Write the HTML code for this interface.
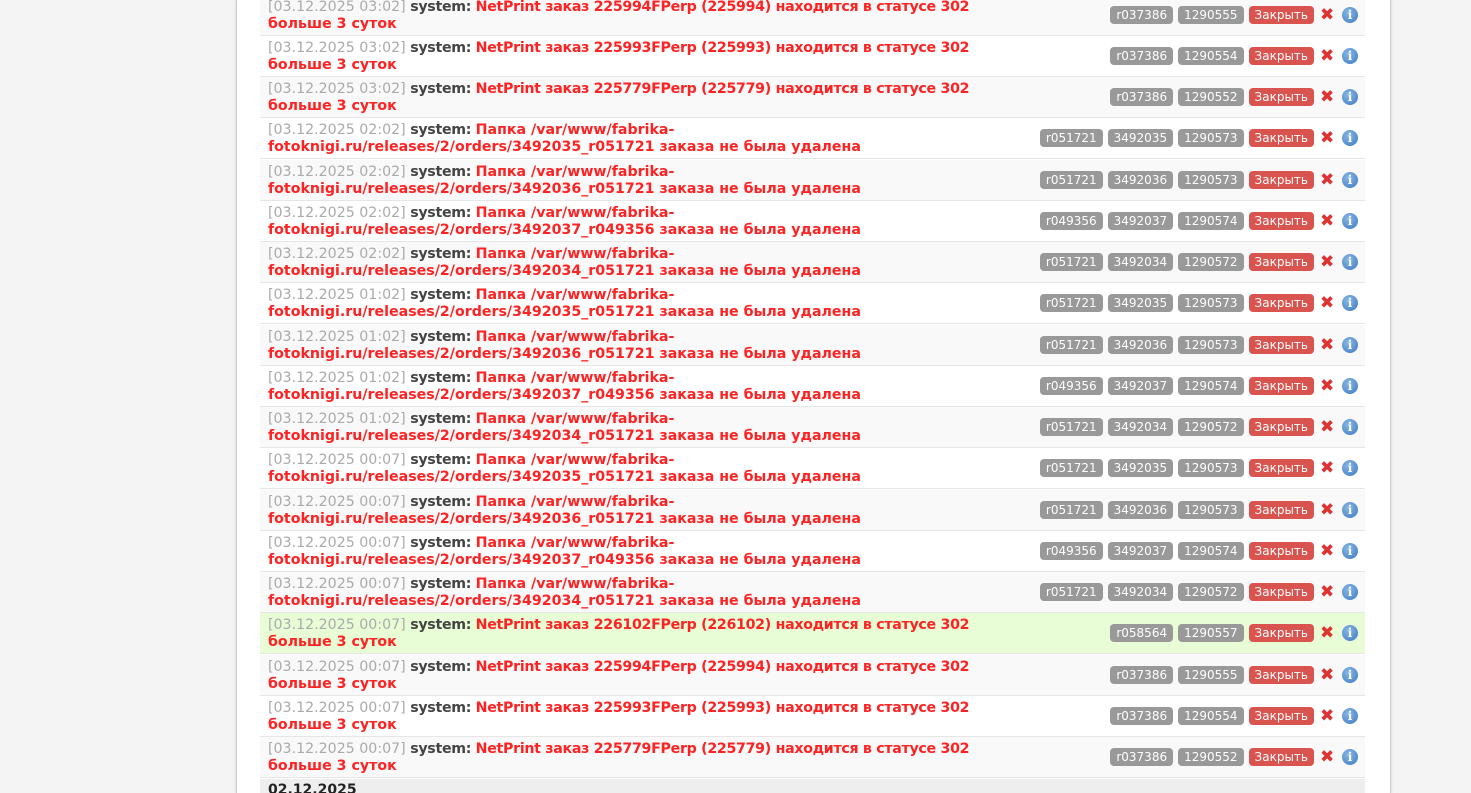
<!DOCTYPE html><html><head><meta charset="utf-8"><style>
html,body{margin:0;width:1471px;height:793px;overflow:hidden}
body{background:#f4f4f4;font-family:"DejaVu Sans",Verdana,sans-serif;position:relative}
.wrap{position:absolute;left:236px;top:0;width:1153px;height:793px;background:#fff;border-left:1px solid #ccc;border-right:1px solid #ccc;box-shadow:0 0 3px rgba(0,0,0,.15)}
.r{position:absolute;left:260px;width:1105px;height:40px;border-bottom:1px solid #e6e6e6;font-size:14.2px;line-height:17px}
.r:nth-child(odd){background:#f9f9f9}
.r.g{background:#e8fdd6!important}
.t{position:absolute;left:8px;top:4px;white-space:nowrap}
.d{color:#aaa}.s{color:#444;font-weight:bold;letter-spacing:-0.3px}.m{color:#f22;font-weight:bold}
.n{letter-spacing:-0.3px}
.b{position:absolute;right:7px;top:11px;display:flex;align-items:center;gap:5px}
.b span{background:#999;color:#fff;font-size:12px;height:18px;line-height:18px;padding:0 6px;border-radius:4px}
.b span.k{background:#d9534f;margin-right:1px}
.x{color:#d33;font-weight:bold;font-size:17px;width:14px;text-align:center;margin-right:3px}
.i{width:16px;height:16px;border-radius:50%;background:radial-gradient(circle at 40% 35%,#8ab8e8,#3a78c0);color:#fff;font:bold 12px/16px "DejaVu Serif",serif;text-align:center}
.dt{position:absolute;left:260px;top:779px;width:1105px;height:20px;background:#eee;font-weight:bold;font-size:14px;color:#222}
</style></head><body><div class="wrap"></div>
<div id="rows">
<div class="r" style="top:-5px"><div class="t"><span class="d">[03.12.2025 03:02]</span> <span class="s">system:</span> <span class="m"><span class="n">NetPrint заказ 225994FPerp (225994) находится в статусе 302</span><br>больше 3 суток</span></div><div class="b"><span>r037386</span><span>1290555</span><span class="k">Закрыть</span><b class="x">✖</b><b class="i">i</b></div></div>
<div class="r" style="top:36px"><div class="t"><span class="d">[03.12.2025 03:02]</span> <span class="s">system:</span> <span class="m"><span class="n">NetPrint заказ 225993FPerp (225993) находится в статусе 302</span><br>больше 3 суток</span></div><div class="b"><span>r037386</span><span>1290554</span><span class="k">Закрыть</span><b class="x">✖</b><b class="i">i</b></div></div>
<div class="r" style="top:77px"><div class="t"><span class="d">[03.12.2025 03:02]</span> <span class="s">system:</span> <span class="m"><span class="n">NetPrint заказ 225779FPerp (225779) находится в статусе 302</span><br>больше 3 суток</span></div><div class="b"><span>r037386</span><span>1290552</span><span class="k">Закрыть</span><b class="x">✖</b><b class="i">i</b></div></div>
<div class="r" style="top:118px"><div class="t"><span class="d">[03.12.2025 02:02]</span> <span class="s">system:</span> <span class="m">Папка /var/www/fabrika-<br>fotoknigi.ru/releases/2/orders/3492035_r051721 заказа не была удалена</span></div><div class="b"><span>r051721</span><span>3492035</span><span>1290573</span><span class="k">Закрыть</span><b class="x">✖</b><b class="i">i</b></div></div>
<div class="r" style="top:160px"><div class="t"><span class="d">[03.12.2025 02:02]</span> <span class="s">system:</span> <span class="m">Папка /var/www/fabrika-<br>fotoknigi.ru/releases/2/orders/3492036_r051721 заказа не была удалена</span></div><div class="b"><span>r051721</span><span>3492036</span><span>1290573</span><span class="k">Закрыть</span><b class="x">✖</b><b class="i">i</b></div></div>
<div class="r" style="top:201px"><div class="t"><span class="d">[03.12.2025 02:02]</span> <span class="s">system:</span> <span class="m">Папка /var/www/fabrika-<br>fotoknigi.ru/releases/2/orders/3492037_r049356 заказа не была удалена</span></div><div class="b"><span>r049356</span><span>3492037</span><span>1290574</span><span class="k">Закрыть</span><b class="x">✖</b><b class="i">i</b></div></div>
<div class="r" style="top:242px"><div class="t"><span class="d">[03.12.2025 02:02]</span> <span class="s">system:</span> <span class="m">Папка /var/www/fabrika-<br>fotoknigi.ru/releases/2/orders/3492034_r051721 заказа не была удалена</span></div><div class="b"><span>r051721</span><span>3492034</span><span>1290572</span><span class="k">Закрыть</span><b class="x">✖</b><b class="i">i</b></div></div>
<div class="r" style="top:283px"><div class="t"><span class="d">[03.12.2025 01:02]</span> <span class="s">system:</span> <span class="m">Папка /var/www/fabrika-<br>fotoknigi.ru/releases/2/orders/3492035_r051721 заказа не была удалена</span></div><div class="b"><span>r051721</span><span>3492035</span><span>1290573</span><span class="k">Закрыть</span><b class="x">✖</b><b class="i">i</b></div></div>
<div class="r" style="top:325px"><div class="t"><span class="d">[03.12.2025 01:02]</span> <span class="s">system:</span> <span class="m">Папка /var/www/fabrika-<br>fotoknigi.ru/releases/2/orders/3492036_r051721 заказа не была удалена</span></div><div class="b"><span>r051721</span><span>3492036</span><span>1290573</span><span class="k">Закрыть</span><b class="x">✖</b><b class="i">i</b></div></div>
<div class="r" style="top:366px"><div class="t"><span class="d">[03.12.2025 01:02]</span> <span class="s">system:</span> <span class="m">Папка /var/www/fabrika-<br>fotoknigi.ru/releases/2/orders/3492037_r049356 заказа не была удалена</span></div><div class="b"><span>r049356</span><span>3492037</span><span>1290574</span><span class="k">Закрыть</span><b class="x">✖</b><b class="i">i</b></div></div>
<div class="r" style="top:407px"><div class="t"><span class="d">[03.12.2025 01:02]</span> <span class="s">system:</span> <span class="m">Папка /var/www/fabrika-<br>fotoknigi.ru/releases/2/orders/3492034_r051721 заказа не была удалена</span></div><div class="b"><span>r051721</span><span>3492034</span><span>1290572</span><span class="k">Закрыть</span><b class="x">✖</b><b class="i">i</b></div></div>
<div class="r" style="top:448px"><div class="t"><span class="d">[03.12.2025 00:07]</span> <span class="s">system:</span> <span class="m">Папка /var/www/fabrika-<br>fotoknigi.ru/releases/2/orders/3492035_r051721 заказа не была удалена</span></div><div class="b"><span>r051721</span><span>3492035</span><span>1290573</span><span class="k">Закрыть</span><b class="x">✖</b><b class="i">i</b></div></div>
<div class="r" style="top:490px"><div class="t"><span class="d">[03.12.2025 00:07]</span> <span class="s">system:</span> <span class="m">Папка /var/www/fabrika-<br>fotoknigi.ru/releases/2/orders/3492036_r051721 заказа не была удалена</span></div><div class="b"><span>r051721</span><span>3492036</span><span>1290573</span><span class="k">Закрыть</span><b class="x">✖</b><b class="i">i</b></div></div>
<div class="r" style="top:531px"><div class="t"><span class="d">[03.12.2025 00:07]</span> <span class="s">system:</span> <span class="m">Папка /var/www/fabrika-<br>fotoknigi.ru/releases/2/orders/3492037_r049356 заказа не была удалена</span></div><div class="b"><span>r049356</span><span>3492037</span><span>1290574</span><span class="k">Закрыть</span><b class="x">✖</b><b class="i">i</b></div></div>
<div class="r" style="top:572px"><div class="t"><span class="d">[03.12.2025 00:07]</span> <span class="s">system:</span> <span class="m">Папка /var/www/fabrika-<br>fotoknigi.ru/releases/2/orders/3492034_r051721 заказа не была удалена</span></div><div class="b"><span>r051721</span><span>3492034</span><span>1290572</span><span class="k">Закрыть</span><b class="x">✖</b><b class="i">i</b></div></div>
<div class="r g" style="top:613px"><div class="t"><span class="d">[03.12.2025 00:07]</span> <span class="s">system:</span> <span class="m"><span class="n">NetPrint заказ 226102FPerp (226102) находится в статусе 302</span><br>больше 3 суток</span></div><div class="b"><span>r058564</span><span>1290557</span><span class="k">Закрыть</span><b class="x">✖</b><b class="i">i</b></div></div>
<div class="r" style="top:655px"><div class="t"><span class="d">[03.12.2025 00:07]</span> <span class="s">system:</span> <span class="m"><span class="n">NetPrint заказ 225994FPerp (225994) находится в статусе 302</span><br>больше 3 суток</span></div><div class="b"><span>r037386</span><span>1290555</span><span class="k">Закрыть</span><b class="x">✖</b><b class="i">i</b></div></div>
<div class="r" style="top:696px"><div class="t"><span class="d">[03.12.2025 00:07]</span> <span class="s">system:</span> <span class="m"><span class="n">NetPrint заказ 225993FPerp (225993) находится в статусе 302</span><br>больше 3 суток</span></div><div class="b"><span>r037386</span><span>1290554</span><span class="k">Закрыть</span><b class="x">✖</b><b class="i">i</b></div></div>
<div class="r" style="top:737px"><div class="t"><span class="d">[03.12.2025 00:07]</span> <span class="s">system:</span> <span class="m"><span class="n">NetPrint заказ 225779FPerp (225779) находится в статусе 302</span><br>больше 3 суток</span></div><div class="b"><span>r037386</span><span>1290552</span><span class="k">Закрыть</span><b class="x">✖</b><b class="i">i</b></div></div>
</div>
<div class="dt"><div style="position:absolute;left:8px;top:3px">02.12.2025</div></div>
</body></html>
